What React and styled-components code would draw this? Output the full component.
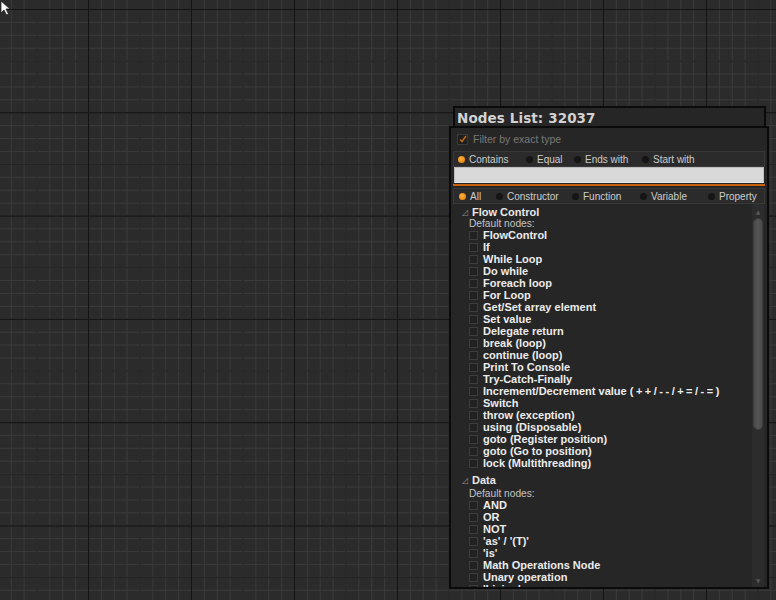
import React from 'react';
import styled, { createGlobalStyle } from 'styled-components';

const Global = createGlobalStyle`
  html, body { margin: 0; padding: 0; background: #2b2b2b; }
  body { font-family: "Liberation Sans", Arial, sans-serif; }
`;

const Canvas = styled.div`
  position: relative; width: 776px; height: 600px; overflow: hidden;
  background-color: #2b2b2b;
  background-image:
    linear-gradient(to right, #141414 1px, transparent 1px),
    linear-gradient(to bottom, #141414 1px, transparent 1px),
    linear-gradient(to right, #222 1px, transparent 1px),
    linear-gradient(to bottom, #222 1px, transparent 1px),
    linear-gradient(to right, #3a3a3a 1px, transparent 1px),
    linear-gradient(to bottom, #3a3a3a 1px, transparent 1px);
  background-size: 103px 100%, 100% 103.3px, 51.5px 100%, 100% 51.65px, 12.875px 100%, 100% 12.91px;
  background-position: 88px 0, 0 9px, 88px 0, 0 9px, 88px 0, 0 9px;
`;

const Cursor = styled.svg` position: absolute; left: 0; top: 0; `;

const Window = styled.div`
  position: absolute; left: 449px; top: 106px; width: 320px;
  display: flex; flex-direction: column; align-items: stretch;
`;

const TitleBar = styled.div`
  margin: 0 3px 0 4px; height: 18px; padding: 0 0 0 2px;
  background: #262626; border: 2px solid #0b0b0b; border-bottom: none;
  color: #d2d2d2; font-family: "DejaVu Sans", Verdana, sans-serif;
  font-weight: bold; font-size: 13.5px; line-height: 20px; letter-spacing: 0.1px;
`;

const Panel = styled.div`
  height: 463px; background: #262626; border: 2px solid #0b0b0b;
  display: flex; flex-direction: column; padding: 2px 2px 0 2px; box-sizing: border-box;
`;

const FilterRow = styled.div`
  display: flex; align-items: center; gap: 5px; height: 18px; padding: 0 0 3px 4px;
  color: #787878; font-size: 10.5px;
`;

const Check = styled.span`
  width: 9px; height: 9px; background: #1e1e1e; border: 1px solid #3a3a3a;
  display: flex; align-items: center; justify-content: center;
`;

const RadioRow = styled.div`
  display: flex; align-items: center; height: 14px;
  background: #2b2b2b; border: 1px solid #383838; padding-left: ${p => p.$pl || 4}px;
  color: #cbcbcb; font-size: 10px; margin-top: ${p => p.$mt || 0}px;
`;

const Radio = styled.span`
  display: flex; align-items: center; gap: 4px; width: ${p => p.$w}px; flex: none;
  &::before {
    content: ''; width: 7px; height: 7px; border-radius: 50%;
    background: ${p => (p.$on ? 'radial-gradient(circle at 40% 40%, #ffb040, #e07a00)' : '#151515')};
  }
`;

const SearchInput = styled.div`
  height: 14px; background: #d9d9d9; border: 1px solid #bdbdbd;
  border-bottom: 1px solid #e8e8e8; margin: 0 1px;
`;

const OrangeLine = styled.div` height: 2px; background: #c8620a; margin-top: 1px; `;

const TreeArea = styled.div`
  flex: 1; display: flex; overflow: hidden;
`;

const Tree = styled.div`
  flex: 1; overflow: hidden; padding: 1px 0 0 9px;
`;

const GroupHead = styled.div`
  display: flex; align-items: center; gap: 1px; height: 12px;
  color: #e8e8e8; font-weight: bold; font-size: 11px; margin-top: ${p => p.$mt || 0}px;
`;

const Tri = styled.span`
  color: #8a8a8a; font-family: "DejaVu Sans", sans-serif; font-size: 8px; font-weight: normal; width: 9px;
`;

const SubHead = styled.div`
  color: #c4c4c4; font-size: 10.2px; height: 10px; line-height: 10px; padding-left: 7px;
  margin-top: ${p => p.$mt || 1}px;
`;

const Item = styled.div`
  display: flex; align-items: center; height: 12px; padding-left: 7px; gap: 5px;
  color: #ececec; font-weight: bold; font-size: 11px; white-space: nowrap;
`;

const Spaced = styled.span` letter-spacing: 2.5px; `;

const Box = styled.span`
  width: 7px; height: 7px; border: 1px solid #3c3c3c; background: #222; flex: none;
`;

const Scrollbar = styled.div`
  width: 12px; display: flex; flex-direction: column; align-items: center;
  background: #2c2c2c; margin-right: 1px;
`;

const Arrow = styled.div`
  height: 14px; display: flex; align-items: center; justify-content: center;
  color: #555; font-family: "DejaVu Sans", sans-serif; font-size: 6px;
`;

const Thumb = styled.div`
  width: 10px; height: 212px; border-radius: 5px;
  background: linear-gradient(to right, #4a4a4a, #555 50%, #4a4a4a);
  border: 1px solid #3d3d3d; box-sizing: border-box;
`;

const Filler = styled.div` flex: 1; `;

const flow = [
  'FlowControl', 'If', 'While Loop', 'Do while', 'Foreach loop', 'For Loop',
  'Get/Set array element', 'Set value', 'Delegate return', 'break (loop)',
  'continue (loop)', 'Print To Console', 'Try-Catch-Finally',
  ['Increment/Decrement value ', '(++/--/+=/-=)'], 'Switch', 'throw (exception)',
  'using (Disposable)', 'goto (Register position)', 'goto (Go to position)',
  'lock (Multithreading)',
];

const data = ['AND', 'OR', 'NOT', "'as' / '(T)'", "'is'", 'Math Operations Node', 'Unary operation', "'Living'"];

const label = n => (Array.isArray(n) ? <span>{n[0]}<Spaced>{n[1]}</Spaced></span> : n);

export default function App() {
  return (
    <Canvas>
      <Global />
      <Cursor width="12" height="16" viewBox="0 0 12 16">
        <path d="M1 1 L1 13 L4 10 L6.5 15 L8.5 14 L6 9 L10 9 Z" fill="#fff" stroke="#222" strokeWidth="0.8" />
      </Cursor>
      <Window>
        <TitleBar>Nodes List: 32037</TitleBar>
        <Panel>
          <FilterRow>
            <Check>
              <svg width="8" height="8" viewBox="0 0 8 8">
                <path d="M1 4.5 L3 6.5 L7 1" stroke="#b86a1a" strokeWidth="1.6" fill="none" />
              </svg>
            </Check>
            Filter by exact type
          </FilterRow>
          <RadioRow>
            <Radio $on $w={68}>Contains</Radio>
            <Radio $w={48}>Equal</Radio>
            <Radio $w={68}>Ends with</Radio>
            <Radio $w={80}>Start with</Radio>
          </RadioRow>
          <SearchInput />
          <OrangeLine />
          <RadioRow $mt={2} $pl={5}>
            <Radio $on $w={37}>All</Radio>
            <Radio $w={76}>Constructor</Radio>
            <Radio $w={68}>Function</Radio>
            <Radio $w={68}>Variable</Radio>
            <Radio $w={60}>Property</Radio>
          </RadioRow>
          <TreeArea>
            <Tree>
              <GroupHead $mt={1}><Tri>◿</Tri>Flow Control</GroupHead>
              <SubHead>Default nodes:</SubHead>
              {flow.map(n => (
                <Item key={String(n)}><Box />{label(n)}</Item>
              ))}
              <GroupHead $mt={5}><Tri>◿</Tri>Data</GroupHead>
              <SubHead $mt={3}>Default nodes:</SubHead>
              {data.map(n => (
                <Item key={n}><Box />{n}</Item>
              ))}
            </Tree>
            <Scrollbar>
              <Arrow>▲</Arrow>
              <Thumb />
              <Filler />
              <Arrow>▼</Arrow>
            </Scrollbar>
          </TreeArea>
        </Panel>
      </Window>
    </Canvas>
  );
}
